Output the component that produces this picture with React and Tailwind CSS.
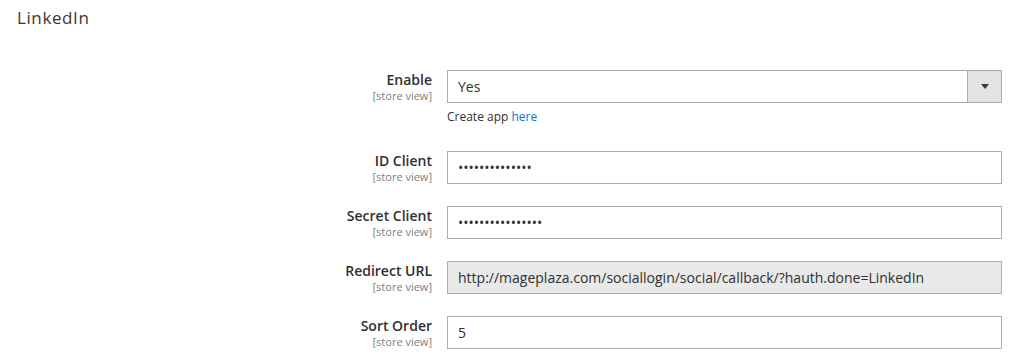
const rows = [
  { label: "ID Client", value: "••••••••••••••" },
  { label: "Secret Client", value: "••••••••••••••••" },
  {
    label: "Redirect URL",
    value: "http://mageplaza.com/sociallogin/social/callback/?hauth.done=LinkedIn",
    disabled: true,
  },
  { label: "Sort Order", value: "5" },
];

function Label({ text }) {
  return (
    <div className="w-[432px] shrink-0 text-right">
      <div className="text-[14px] leading-[19px] font-semibold text-[#303030]">
        {text}
      </div>
      <div className="text-[11px] leading-[14px] text-[#808080]">
        [store view]
      </div>
    </div>
  );
}

export default function App() {
  return (
    <div className="w-[1022px] h-[357px] bg-white font-['Open_Sans',sans-serif] overflow-hidden">
      <div className="pl-[17px] pt-[7px] text-[17px] leading-[22px] tracking-[0.035em] text-[#41362f]">
        LinkedIn
      </div>

      <div className="mt-[41px] pr-[20px]">
        {/* Enable */}
        <div className="flex mb-[22px]">
          <Label text="Enable" />
          <div className="ml-[15px] flex-1">
            <div className="flex h-[33px] border border-[#adadad] bg-white">
              <div className="flex-1 flex items-center px-[10px] text-[14px] text-[#303030]">
                Yes
              </div>
              <div className="w-[34px] flex items-center justify-center bg-[#e3e3e3] border-l border-[#adadad]">
                <span className="w-0 h-0 border-x-[4px] border-t-[5px] border-x-transparent border-t-[#41362f]" />
              </div>
            </div>
            <div className="mt-[5px] pb-[3px] text-[12px] leading-[18px] text-[#303030]">
              Create app <span className="text-[#007bdb]">here</span>
            </div>
          </div>
        </div>

        {rows.map((r) => (
          <div key={r.label} className="flex mb-[22px]">
            <Label text={r.label} />
            <div className="ml-[15px] flex-1">
              <div
                className={
                  r.disabled
                    ? "h-[33px] flex items-center px-[10px] border border-[#adadad] bg-[#e9e9e9] text-[14px] text-[#303030] whitespace-nowrap overflow-hidden"
                    : "h-[33px] flex items-center px-[10px] border border-[#adadad] bg-white text-[14px] text-[#303030] whitespace-nowrap overflow-hidden"
                }
              >
                {r.value}
              </div>
            </div>
          </div>
        ))}
      </div>
    </div>
  );
}
